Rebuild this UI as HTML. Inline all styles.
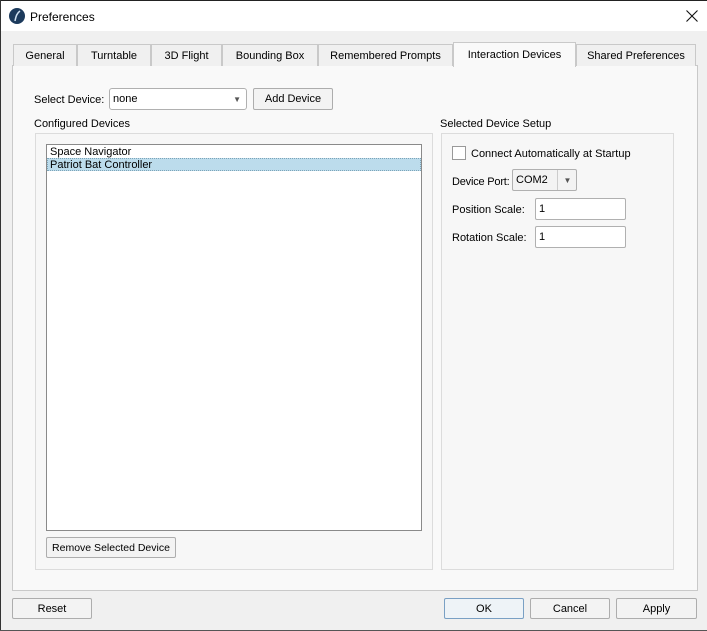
<!DOCTYPE html>
<html><head><style>
*{box-sizing:border-box;margin:0;padding:0}
body{width:707px;height:631px;background:#f0f0f0;font-family:"Liberation Sans",sans-serif;font-size:11px;color:#000;position:relative;overflow:hidden}
.a{position:absolute}
.title{left:0;top:0;width:707px;height:31px;background:#fff;border-top:1px solid #222}
.tab{position:absolute;top:44px;height:22px;border:1px solid #c9c9c9;border-bottom:none;background:#f0f0f0;text-align:center;line-height:22px}
.pane{left:12px;top:65px;width:686px;height:526px;background:#f9f9f9;border:1px solid #c9c9c9}
.btn{position:absolute;border:1px solid #adadad;border-radius:2px;background:#f3f3f3;text-align:center;line-height:20px;height:21px}
.grp{position:absolute;border:1px solid #dcdcdc;background:#f7f7f7}
.inp{position:absolute;background:#fff;border:1px solid #b0b0b0;border-radius:2px;height:22px;line-height:21px;padding-left:3px}
</style></head><body>
<div class="a" style="left:0;top:0;width:1px;height:631px;background:#333;z-index:5"></div>
<div class="a" style="left:0;top:630px;width:707px;height:1px;background:#555;z-index:5"></div>
<div class="a title">
<svg class="a" style="left:9px;top:7px" width="16" height="16"><circle cx="8" cy="8" r="8" fill="#1c3a5c"/><path d="M6 13 C7 8 8 5 11 3" stroke="#cfe0f0" stroke-width="1.5" fill="none"/></svg>
<div class="a" style="left:30px;top:9px;font-size:12px">Preferences</div>
<svg class="a" style="left:686px;top:9px" width="12" height="12"><path d="M0.5 0.5L11.5 11.5M11.5 0.5L0.5 11.5" stroke="#111" stroke-width="1.1"/></svg>
</div>
<div class="a pane"></div>
<div class="tab" style="left:13px;width:64px">General</div>
<div class="tab" style="left:77px;width:74px">Turntable</div>
<div class="tab" style="left:151px;width:71px">3D Flight</div>
<div class="tab" style="left:222px;width:96px">Bounding Box</div>
<div class="tab" style="left:318px;width:135px">Remembered Prompts</div>
<div class="tab" style="left:453px;width:123px;top:42px;height:25px;background:#f9f9f9;line-height:24px;z-index:2">Interaction Devices</div>
<div class="tab" style="left:576px;width:120px">Shared Preferences</div>

<div class="a" style="left:34px;top:94px">Select Device:</div>
<div class="inp" style="left:109px;top:88px;width:138px;border-radius:3px;">none<span class="a" style="right:5px;top:0;font-size:8px;color:#555">▼</span></div>
<div class="btn" style="left:253px;top:88px;width:80px;height:22px;line-height:21px">Add Device</div>

<div class="a" style="left:34px;top:118px">Configured Devices</div>
<div class="grp" style="left:35px;top:133px;width:398px;height:437px"></div>
<div class="a" style="left:46px;top:144px;width:376px;height:387px;background:#fff;border:1px solid #8a8a8a"></div>
<div class="a" style="left:50px;top:146px">Space Navigator</div>
<div class="a" style="left:47px;top:158px;width:374px;height:13px;background:#bcdcec;border:1px dotted #7da4b8"></div>
<div class="a" style="left:50px;top:159px">Patriot Bat Controller</div>
<div class="btn" style="left:46px;top:537px;width:130px;height:21px;font-size:10.5px">Remove Selected Device</div>

<div class="a" style="left:440px;top:118px">Selected Device Setup</div>
<div class="grp" style="left:441px;top:133px;width:233px;height:437px"></div>
<div class="a" style="left:452px;top:146px;width:14px;height:14px;background:#fff;border:1px solid #999"></div>
<div class="a" style="left:471px;top:148px">Connect Automatically at Startup</div>
<div class="a" style="left:452px;top:176px;letter-spacing:-0.2px">Device Port:</div>
<div class="inp" style="left:512px;top:169px;width:65px;background:#f3f3f3">COM2<span class="a" style="left:44px;top:0;height:20px;border-left:1px solid #ccc;width:20px;text-align:center;font-size:8px;color:#555">▼</span></div>
<div class="a" style="left:452px;top:204px">Position Scale:</div>
<div class="inp" style="left:535px;top:198px;width:91px">1</div>
<div class="a" style="left:452px;top:232px">Rotation Scale:</div>
<div class="inp" style="left:535px;top:226px;width:91px">1</div>

<div class="btn" style="left:12px;top:598px;width:80px">Reset</div>
<div class="btn" style="left:444px;top:598px;width:80px;border-color:#7aa0c4;background:#eef3f7">OK</div>
<div class="btn" style="left:530px;top:598px;width:80px">Cancel</div>
<div class="btn" style="left:616px;top:598px;width:81px">Apply</div>
</body></html>
